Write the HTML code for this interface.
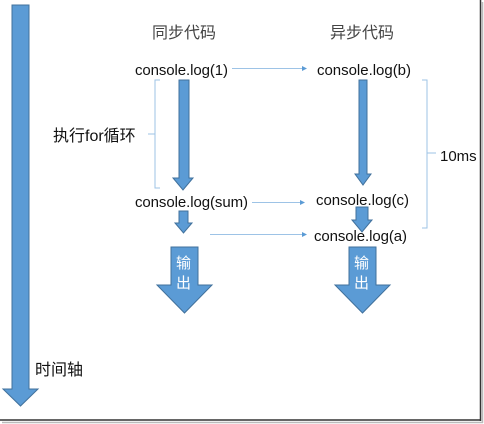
<!DOCTYPE html>
<html><head><meta charset="utf-8"><style>
html,body{margin:0;padding:0;background:#fff;}
svg{display:block;}
text{font-family:"Liberation Sans","Noto Sans CJK SC",sans-serif;font-size:15px;fill:#111;}
.cn{fill:#444;font-size:16px;}
</style></head><body>
<svg width="484" height="424" viewBox="0 0 484 424">
<rect x="0" y="0" width="480" height="420" fill="#fff"/>
<line x1="480.5" y1="0" x2="480.5" y2="421" stroke="#333" stroke-width="1.5"/>
<line x1="0" y1="420" x2="481" y2="420" stroke="#333" stroke-width="1.5"/>
<line x1="482.5" y1="2" x2="482.5" y2="423" stroke="#bbb" stroke-width="1.5"/>
<line x1="2" y1="422.5" x2="483" y2="422.5" stroke="#bbb" stroke-width="1.5"/>
<g fill="#5b9bd5" stroke="#41719c" stroke-width="1">
<polygon points="12,5 29,5 29,389 38,389 20.5,406 3,389 12,389"/>
<polygon points="179,80 189,80 189,178 193,178 183,190 173,178 179,178"/>
<polygon points="359,80 367,80 367,174 371,174 363,185 355,174 359,174"/>
<polygon points="179,211 188,211 188,223 192,223 183.5,233 175,223 179,223"/>
<polygon points="356,207 368,207 368,220 372,220 362,232 352,220 356,220"/>
<polygon points="171,247 198,247 198,285 212,285 184.5,313 157,285 171,285"/>
<polygon points="349,247 376,247 376,285 390,285 362.5,313 335,285 349,285"/>
</g>
<g stroke="#9dc3e6" stroke-width="1" fill="none">
<line x1="232" y1="68.5" x2="302" y2="68.5"/>
<line x1="252" y1="202.5" x2="300" y2="202.5"/>
<line x1="210" y1="234.5" x2="302" y2="234.5"/>
<path d="M160,80 H155 V188 H160 M155,134 H148"/>
<path d="M422,80 H427 V228 H422 M427,153 H436"/>
</g>
<g fill="#5b9bd5">
<polygon points="302,66 307,68.5 302,71"/>
<polygon points="300,200 305,202.5 300,205"/>
<polygon points="302,232 307,234.5 302,237"/>
</g>
<text class="cn" x="152" y="38">同步代码</text>
<text class="cn" x="330" y="38">异步代码</text>
<text x="135" y="75" textLength="93">console.log(1)</text>
<text x="317" y="75" textLength="94">console.log(b)</text>
<text x="53" y="141" style="font-size:16px">执行for循环</text>
<text x="440" y="161">10ms</text>
<text x="135" y="207" textLength="113">console.log(sum)</text>
<text x="316" y="205" textLength="93">console.log(c)</text>
<text x="314" y="241" textLength="93">console.log(a)</text>
<text x="35" y="375" style="font-size:16px">时间轴</text>
<text x="176" y="268" style="fill:#fff;font-size:15px">输</text>
<text x="176" y="288" style="fill:#fff;font-size:15px">出</text>
<text x="354" y="268" style="fill:#fff;font-size:15px">输</text>
<text x="354" y="288" style="fill:#fff;font-size:15px">出</text>
</svg>
</body></html>
